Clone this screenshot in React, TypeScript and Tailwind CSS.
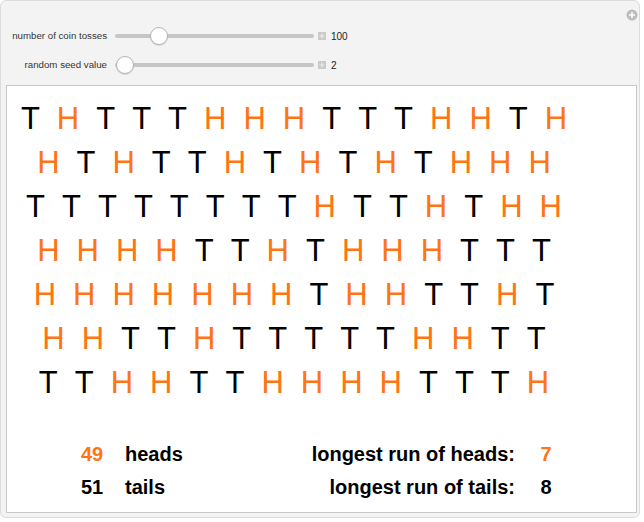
import React from 'react'

const ROWS = [
  'THTTTHHHTTTHHTH',
  'HTHTTHTHTHTHHH',
  'TTTTTTTTHTTHTHH',
  'HHHHTTHTHHHTTT',
  'HHHHHHHTHHTTHT',
  'HHTTHTTTTTHHTT',
  'TTHHTTHHHHTTTH',
]

const SLIDERS = [
  { label: 'number of coin tosses', thumb: 35, value: '100' },
  { label: 'random seed value', thumb: 1, value: '2' },
]

function PlusBox() {
  return (
    <svg width="8" height="8" viewBox="0 0 8 8">
      <rect x="0" y="0" width="8" height="8" fill="#cacaca" />
      <path d="M4 1.5v5M1.5 4h5" stroke="#ececec" strokeWidth="1.2" />
    </svg>
  )
}

function Slider({ label, thumb, value }: { label: string; thumb: number; value: string }) {
  return (
    <div className="flex items-center h-[20px]">
      <div className="w-[106px] text-right text-[9.7px] text-[#333]">{label}</div>
      <div className="relative ml-[8px] w-[199px] h-[20px] flex items-center">
        <div className="w-full h-[4px] rounded-full bg-[#c6c6c6]" />
        <div
          className="absolute top-[1px] w-[18px] h-[18px] rounded-full bg-white border border-[#b4b4b4] shadow-[0_1px_1px_rgba(0,0,0,0.12)]"
          style={{ left: thumb }}
        />
      </div>
      <div className="ml-[4px] flex items-center">
        <PlusBox />
      </div>
      <div className="ml-[5px] text-[10px] text-[#222]">{value}</div>
    </div>
  )
}

function StatRow({ num, numColor, word, label, run, runColor }: {
  num: string; numColor: string; word: string; label: string; run: string; runColor: string
}) {
  return (
    <div className="flex h-[33px] leading-[33px] text-[20px] font-bold text-black">
      <div className={`w-[40px] text-center ${numColor}`}>{num}</div>
      <div className="ml-[13px] w-[120px]">{word}</div>
      <div className="w-[270px] text-right">{label}</div>
      <div className={`ml-[11px] w-[40px] text-center ${runColor}`}>{run}</div>
    </div>
  )
}

export default function App() {
  return (
    <div className="w-[644px] h-[522px] bg-white" style={{ fontFamily: '"Liberation Sans", Arial, sans-serif' }}>
      <div className="relative w-[640px] h-[518px] bg-[#f3f3f3] border border-[#dcdcdc] rounded-[6px] pt-[25px]">
        {/* controls */}
        <div className="flex flex-col gap-[9px]">
          {SLIDERS.map(s => (
            <Slider key={s.label} {...s} />
          ))}
        </div>

        {/* top-right plus */}
        <svg className="absolute left-[625px] top-[8px]" width="12" height="12" viewBox="0 0 12 12">
          <circle cx="6" cy="6" r="5.5" fill="#bdbdbd" />
          <path d="M6 3v6M3 6h6" stroke="#fff" strokeWidth="1.6" />
        </svg>

        {/* output panel */}
        <div className="ml-[5px] mt-[10px] w-[631px] h-[428px] bg-white border border-[#c8c8c8]">
          <div className="w-[574px] pt-[11px]">
            {ROWS.map((row, i) => (
              <div key={i} className="flex justify-center gap-[17px] h-[44px] leading-[44px] text-[31px]">
                {row.split('').map((c, j) => (
                  <span key={j} className={c === 'H' ? 'text-[#ff7413]' : 'text-black'}>{c}</span>
                ))}
              </div>
            ))}
          </div>

          <div className="mt-[33px] pl-[65px]">
            <StatRow num="49" numColor="text-[#ff7413]" word="heads" label="longest run of heads:" run="7" runColor="text-[#ff7413]" />
            <StatRow num="51" numColor="text-black" word="tails" label="longest run of tails:" run="8" runColor="text-black" />
          </div>
        </div>
      </div>
    </div>
  )
}
